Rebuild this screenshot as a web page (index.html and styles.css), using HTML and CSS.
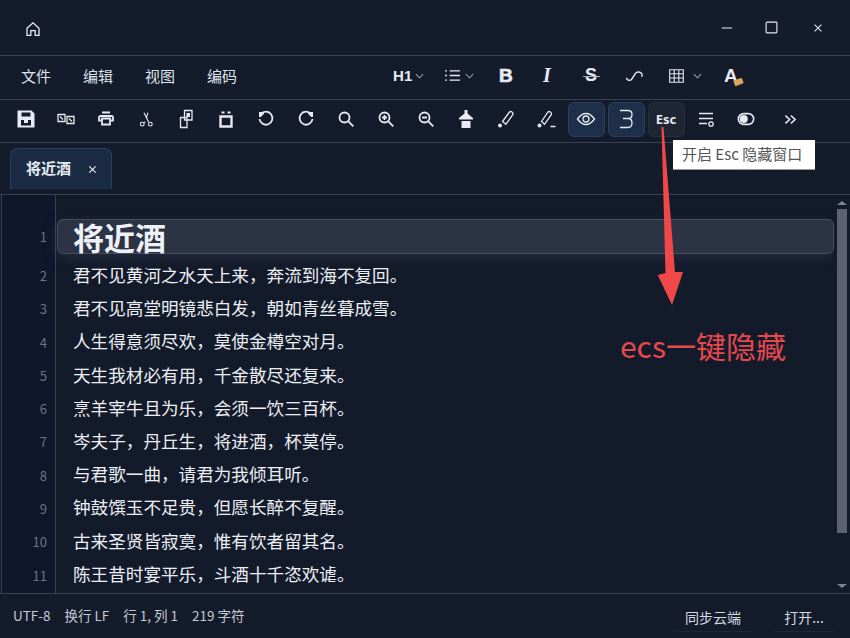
FILE: index.html
```html
<!DOCTYPE html>
<html lang="zh-CN">
<head>
    <meta charset="UTF-8">
    <meta name="viewport" content="width=device-width, initial-scale=1.0">
    <title>将近酒</title>
    <link rel="stylesheet" href="styles.css">
</head>
<body>
    <div class="window">
        <div class="titlebar">
            <svg class="home-icon" viewBox="0 0 16 16"><path d="M2 7.200 8 1.800l6 5.400V14.400H10.200V9.600H5.800v4.800H2z"/></svg>
            <div class="window-buttons">
                <svg viewBox="0 0 14 14"><path d="M1 7h12"/></svg>
                <svg viewBox="0 0 14 14"><rect x="1.200" y="1.200" width="11.600" height="11.600" rx="1"/></svg>
                <svg viewBox="0 0 14 14"><path d="M3 3l8 8M11 3l-8 8"/></svg>
            </div>
        </div>

        <div class="menubar">
            <div class="menu">
                <span>文件</span>
                <span>编辑</span>
                <span>视图</span>
                <span>编码</span>
            </div>
            <div class="format">
                <span class="fmt fmt-h1">H1<svg class="chevron" viewBox="0 0 10 6"><path d="M1 1l4 4 4-4"/></svg></span>
                <span class="fmt fmt-list">
                    <svg class="icon-list" viewBox="0 0 16 14"><path d="M5 2h11M5 7h11M5 12h11M0 2h2M0 7h2M0 12h2"/></svg>
                    <svg class="chevron" viewBox="0 0 10 6"><path d="M1 1l4 4 4-4"/></svg>
                </span>
                <span class="fmt fmt-b">B</span>
                <span class="fmt fmt-i">I</span>
                <span class="fmt fmt-s">S</span>
                <span class="fmt fmt-link"><svg viewBox="0 0 20 12"><path d="M1.500 8c.5 2.800 4 3.400 5.500 1.400L11 3.200c1.500-2 5-1.800 6.500.2.800 1.200.7 2.400 0 3.600"/></svg></span>
                <span class="fmt fmt-table">
                    <svg class="icon-table" viewBox="0 0 15 14"><path d="M.7.7h13.600v12.600H.7zM.7 4.800h13.600M.7 9h13.600M5.200.7v12.600M9.800.7v12.600"/></svg>
                    <svg class="chevron" viewBox="0 0 10 6"><path d="M1 1l4 4 4-4"/></svg>
                </span>
                <span class="fmt fmt-color">A<i class="marker"></i></span>
            </div>
        </div>

        <div class="toolbar">
            <span class="tool"><svg viewBox="0 0 20 20"><path class="solid" fill-rule="evenodd" d="M1.500 1.500h14l3 3v14h-17zM5.500 3.500v4h9v-4zM5 11v5.500h10V11z"/><path class="solid" d="M8 11h4v3H8z"/></svg></span>
            <span class="tool"><svg viewBox="0 0 20 20"><path class="thin" d="M2 5.500h7v7H2zM11 7.500h7v7h-7zM4 7.500l3 3M13 9.500l3 3"/></svg></span>
            <span class="tool"><svg viewBox="0 0 20 20"><path class="thick" d="M6 3.500h8M3 8.500q0-1.500 1.500-1.500h11q1.500 0 1.500 1.500v3h-2M3 8.500v3h2M6 9.500h8v6H6z"/></svg></span>
            <span class="tool"><svg class="icon-cut" viewBox="0 0 20 20"><path class="thin" d="M7 2l5.500 11M11.500 2 10 8M8.500 12.500 7.500 14"/><circle class="thin" cx="5" cy="15.500" r="2.200"/><circle class="thin" cx="14.500" cy="15.500" r="2.200"/></svg></span>
            <span class="tool"><svg viewBox="0 0 20 20"><path class="thin" d="M8.500 1.500h7.500v9.500H8.500zM4.500 8.500h6.500v10H4.500z"/><path class="solid" d="M10.500 4h3.500v4h-3.500z"/></svg></span>
            <span class="tool"><svg viewBox="0 0 20 20"><path class="paste" d="M4.500 7.500h11v10h-11z"/><path class="solid" d="M5.500 2.500h3v2h-3zM11.500 2.500h3v2h-3z"/></svg></span>
            <span class="tool"><svg viewBox="0 0 20 20"><path class="thick" d="M5 5a6.500 6.500 0 1 1-1.500 5"/><path class="solid" d="M3 3h5v1.800L4.800 8H3z"/></svg></span>
            <span class="tool"><svg viewBox="0 0 20 20"><path class="thick" d="M15 5a6.500 6.500 0 1 0 1.500 5"/><path class="solid" d="M17 3h-5v1.800L15.200 8H17z"/></svg></span>
            <span class="tool"><svg viewBox="0 0 20 20"><circle class="thick" cx="8.500" cy="8.500" r="5"/><path class="thick" d="M12.300 12.300l5 5"/></svg></span>
            <span class="tool"><svg viewBox="0 0 20 20"><circle class="thick" cx="8.500" cy="8.500" r="5"/><path class="thick" d="M12.300 12.300l5 5M6 8.500h5M8.500 6v5"/></svg></span>
            <span class="tool"><svg viewBox="0 0 20 20"><circle class="thick" cx="8.500" cy="8.500" r="5"/><path class="thick" d="M12.300 12.300l5 5M6 8.500h5"/></svg></span>
            <span class="tool"><svg viewBox="0 0 20 20"><path class="solid" d="M8.500 1h3v3.500L17 9v1.500H3V9l5.500-4.500zM5.500 12h9v7h-9z"/></svg></span>
            <span class="tool"><svg viewBox="0 0 20 20"><path class="thin" d="M6.500 12.500 13.500 3q1-1 2.500 0t.8 2.700l-7 9.600z"/><circle class="solid" cx="4" cy="16.500" r="2"/></svg></span>
            <span class="tool"><svg viewBox="0 0 20 20"><path class="thin" d="M5.500 12.500 12 3q1-1 2.500 0t.8 2.700l-6.800 9.600zM14.500 17.500h5"/><circle class="solid" cx="3.500" cy="16.500" r="2"/></svg></span>
            <span class="tool tool-on"><span class="btn"><svg viewBox="0 0 20 20"><path class="thin" d="M1.500 10Q5.500 4.500 10 4.500T18.500 10Q14.500 15.500 10 15.500T1.500 10z"/><circle class="thin" cx="10" cy="10" r="3"/></svg></span></span>
            <span class="tool tool-on"><span class="btn"><svg viewBox="0 0 20 20"><path class="thin" d="M4 1.500h8q4 0 4 4t-4 4H7h5q4 0 4 4.500t-4 4.500H4"/></svg></span></span>
            <span class="tool tool-dim"><span class="btn btn-esc">Esc</span></span>
            <span class="tool"><svg viewBox="0 0 20 20"><path class="thin" d="M3 4.500h14M3 9.500h14M3 14.500h8"/><circle class="thin" cx="15" cy="15" r="2.200"/></svg></span>
            <span class="tool"><svg class="icon-toggle" viewBox="0 0 20 20"><rect class="thick" x="1.500" y="4" width="17" height="12" rx="6"/><circle class="solid" cx="7.500" cy="10" r="4.500"/></svg></span>
            <span class="tool tool-more"><svg viewBox="0 0 20 20"><path class="thick" d="M4 5.500l5 4.500-5 4.500M10.500 5.500l5 4.500-5 4.500"/></svg></span>
        </div>

        <div class="tabbar">
            <div class="tab">
                <span class="tab-name">将近酒</span>
                <svg class="tab-close" viewBox="0 0 10 10"><path d="M1.500 1.500l7 7M8.500 1.500l-7 7"/></svg>
            </div>
        </div>

        <div class="editor">
            <div class="gutter">
                <div class="num num-first">1</div>
                <div class="num">2</div>
                <div class="num">3</div>
                <div class="num">4</div>
                <div class="num">5</div>
                <div class="num">6</div>
                <div class="num">7</div>
                <div class="num">8</div>
                <div class="num">9</div>
                <div class="num">10</div>
                <div class="num">11</div>
            </div>
            <div class="lines">
                <h1 class="line-active">将近酒</h1>
                <p>君不见黄河之水天上来，奔流到海不复回。</p>
                <p>君不见高堂明镜悲白发，朝如青丝暮成雪。</p>
                <p>人生得意须尽欢，莫使金樽空对月。</p>
                <p>天生我材必有用，千金散尽还复来。</p>
                <p>烹羊宰牛且为乐，会须一饮三百杯。</p>
                <p>岑夫子，丹丘生，将进酒，杯莫停。</p>
                <p>与君歌一曲，请君为我倾耳听。</p>
                <p>钟鼓馔玉不足贵，但愿长醉不复醒。</p>
                <p>古来圣贤皆寂寞，惟有饮者留其名。</p>
                <p>陈王昔时宴平乐，斗酒十千恣欢谑。</p>
            </div>
            <div class="scrollbar">
                <i class="arrow-up"></i>
                <div class="thumb"></div>
                <i class="arrow-down"></i>
            </div>
        </div>

        <div class="statusbar">
            <div class="status-info">
                <span>UTF-8</span>
                <span>换行 LF</span>
                <span>行 1, 列 1</span>
                <span>219 字符</span>
            </div>
            <div class="status-buttons">
                <span class="status-btn status-sync">同步云端</span>
                <span class="status-btn status-open">打开...</span>
            </div>
        </div>

        <div class="tooltip">开启 Esc 隐藏窗口</div>
        <svg class="annotation-arrow" viewBox="0 0 850 638"><polygon points="661.500,127 663.500,127 675,272 683,272 672,305 657.700,275 665.500,273"/></svg>
        <div class="annotation-text">ecs一键隐藏</div>
    </div>
</body>
</html>
```

FILE: styles.css
```css
* {
    box-sizing: border-box;
}
body {
    margin: 0;
    background: #141b2b;
    font-family: "Noto Sans CJK SC", "Noto Sans", sans-serif;
    color: #e6eaf2;
}
svg {
    display: block;
    fill: none;
    stroke: currentColor;
}
.window {
    position: relative;
    width: 850px;
    height: 638px;
    overflow: hidden;
    display: flex;
    flex-direction: column;
}

/* title bar */
.titlebar {
    height: 56px;
    flex: none;
    display: flex;
    align-items: center;
    justify-content: space-between;
    padding: 0 26px 0 25px;
    border-bottom: 1px solid #3a4150;
}
.home-icon {
    width: 16px;
    height: 16px;
    margin-top: 2px;
    stroke-width: 1.300;
}
.window-buttons {
    display: flex;
    align-items: center;
    gap: 33px;
}
.window-buttons svg {
    width: 12px;
    height: 12px;
    stroke-width: 1.200;
}
.window-buttons svg:nth-child(2) {
    margin-left: -1px;
    margin-right: 1px;
    width: 13px;
    height: 13px;
}

/* menu + format row */
.menubar {
    height: 44px;
    flex: none;
    display: flex;
    align-items: center;
    padding-bottom: 4px;
    border-bottom: 1px solid #3a4150;
}
.menu {
    display: flex;
    padding-left: 5px;
    font-size: 15px;
    color: #dfe3ea;
}
.menu span {
    padding: 0 16px;
}
.format {
    position: relative;
    display: flex;
    align-items: center;
    margin-left: 140px;
    height: 100%;
}
.fmt {
    display: flex;
    align-items: center;
    color: #e6eaf2;
}
.chevron {
    width: 9px;
    height: 6px;
    stroke: #9aa1ae;
    stroke-width: 1.200;
}
.fmt-h1 {
    font-size: 15px;
    font-weight: 700;
    width: 52px;
    gap: 3px;
    font-family: "Liberation Sans", sans-serif;
}
.fmt-list {
    width: 54px;
    gap: 5px;
}
.icon-list {
    width: 15px;
    height: 13px;
    stroke-width: 1.500;
}
.fmt-b {
    width: 43px;
    font: 700 19px "Liberation Sans", sans-serif;
    -webkit-text-stroke: 0.700px #e6eaf2;
}
.fmt-i {
    width: 43px;
    font: italic 700 20px "Liberation Serif", serif;
    padding-left: 1px;
}
.fmt-s {
    width: 40px;
    position: relative;
    font: 700 18px "Liberation Sans", sans-serif;
}
.fmt-s::after {
    content: "";
    position: absolute;
    left: -2px;
    top: 11px;
    width: 17px;
    height: 1px;
    background: #aab0bc;
}
.fmt-link {
    width: 44px;
}
.fmt-link svg {
    width: 19px;
    height: 12px;
    stroke-width: 1.500;
}
.fmt-table {
    width: 55px;
    gap: 9px;
}
.icon-table {
    width: 15px;
    height: 14px;
    stroke-width: 1.100;
}
.fmt-color {
    position: relative;
    font: 700 19px "Liberation Sans", sans-serif;
}
.marker {
    position: absolute;
    left: 10px;
    top: 14px;
    width: 9px;
    height: 6px;
    background: #d9a45f;
    transform: rotate(-20deg);
    border-radius: 1px;
}

/* icon toolbar */
.toolbar {
    height: 43px;
    flex: none;
    display: flex;
    align-items: center;
    padding-left: 6px;
    padding-bottom: 4px;
    border-bottom: 1px solid #3a4150;
}
.tool {
    width: 40px;
    height: 100%;
    flex: none;
    display: flex;
    align-items: center;
    justify-content: center;
}
.tool svg {
    width: 20px;
    height: 20px;
}
.tool .icon-cut {
    width: 17px;
    height: 17px;
}
.tool .icon-toggle {
    width: 18px;
    height: 18px;
}
.tool-more {
    margin-left: 4px;
}
.tool-more svg {
    width: 17px;
    height: 17px;
}
.solid {
    fill: #e6eaf2;
    stroke: none;
}
.thin {
    stroke-width: 1.300;
}
.thick {
    stroke-width: 1.800;
}
.paste {
    stroke-width: 2.400;
}
.btn {
    width: 37px;
    height: 35px;
    display: flex;
    align-items: center;
    justify-content: center;
    border-radius: 6px;
    background: #1e2f49;
    border: 1px solid #2c3f5c;
}
.tool-dim .btn {
    background: #1e2533;
    border-color: #272e3c;
}
.btn-esc {
    font: 700 13px "Noto Sans", sans-serif;
}

/* tabs */
.tabbar {
    height: 52px;
    flex: none;
    padding: 5px 0 0 10px;
    border-bottom: 1px solid #3a4150;
}
.tab {
    width: 102px;
    height: 41px;
    display: flex;
    align-items: center;
    padding-left: 15px;
    background: #1b2b43;
    border: 1px solid #2a4060;
    border-bottom: none;
    border-radius: 7px 7px 0 0;
}
.tab-name {
    font-size: 15px;
    font-weight: 700;
    width: 45px;
    margin-top: -3px;
}
.tab-close {
    width: 9px;
    height: 9px;
    margin-left: 17px;
    margin-top: 1px;
    stroke-width: 1.300;
}

/* editor */
.editor {
    flex: 1;
    min-height: 0;
    display: flex;
    position: relative;
    overflow: hidden;
    margin-left: 1px;
    background: #141b2b;
    border-left: 1px solid #3a4150;
}
.gutter {
    width: 54px;
    flex: none;
    padding-top: 24px;
    background: #10172a;
    border-right: 1px solid #3a4150;
    text-align: right;
    font-size: 13px;
    color: #6d7482;
}
.num {
    height: 33.300px;
    line-height: 33.300px;
    padding-right: 8px;
}
.num-first {
    height: 35px;
    line-height: 35px;
    margin-bottom: 5px;
}
.lines {
    flex: 1;
    min-width: 0;
    padding: 24px 0 0 1px;
    background: #131a2a;
}
.line-active {
    margin: 0 0 4px;
    height: 35px;
    line-height: 34px;
    padding-left: 15px;
    font-size: 31px;
    font-weight: 700;
    color: #eef1f6;
    background: #2c3344;
    border: 1px solid #464d5f;
    border-radius: 6px;
    box-shadow: 0 4px 14px rgba(70, 78, 100, 0.35);
}
.lines p {
    margin: 0;
    height: 33.200px;
    line-height: 33.200px;
    padding-left: 16px;
    font-size: 17.600px;
    color: #eceff4;
}
.scrollbar {
    width: 16px;
    flex: none;
    display: flex;
    flex-direction: column;
    align-items: center;
    padding: 6px 0 5px;
    background: #131a2a;
}
.arrow-up {
    border: 5px solid transparent;
    border-top: none;
    border-bottom: 4px solid #7d8492;
}
.thumb {
    width: 10px;
    height: 324px;
    margin-top: 4px;
    background: #5c6272;
}
.arrow-down {
    margin-top: auto;
    border: 5px solid transparent;
    border-bottom: none;
    border-top: 4px solid #7d8492;
}

/* status bar */
.statusbar {
    height: 45px;
    flex: none;
    display: flex;
    align-items: center;
    justify-content: space-between;
    padding: 0 14px 2px 13px;
    border-top: 1px solid #3a4150;
    font-size: 13.500px;
    color: #c4c9d2;
}
.status-info {
    display: flex;
    gap: 14px;
}
.status-buttons {
    display: flex;
    gap: 18px;
}
.status-btn {
    height: 30px;
    line-height: 30px;
    margin-top: 4px;
    text-align: center;
    border-radius: 6px;
    border-bottom: 1px solid #1f2636;
    font-size: 14px;
    color: #d6dae1;
}
.status-sync {
    width: 82px;
}
.status-open {
    width: 64px;
}

/* tooltip and the arrow drawn over the screenshot */
.tooltip {
    position: absolute;
    left: 673px;
    top: 140px;
    width: 142px;
    height: 30px;
    line-height: 28px;
    padding-left: 9px;
    font-size: 15px;
    white-space: nowrap;
    color: #555;
    background: #fff;
    border-bottom: 1px solid #999;
}
.annotation-arrow {
    position: absolute;
    left: 0;
    top: 0;
    width: 850px;
    height: 638px;
    stroke: none;
    fill: #f04848;
    pointer-events: none;
}
.annotation-text {
    position: absolute;
    left: 620px;
    top: 323px;
    font-size: 30px;
    line-height: 44px;
    white-space: nowrap;
    color: #e5484d;
}
```
